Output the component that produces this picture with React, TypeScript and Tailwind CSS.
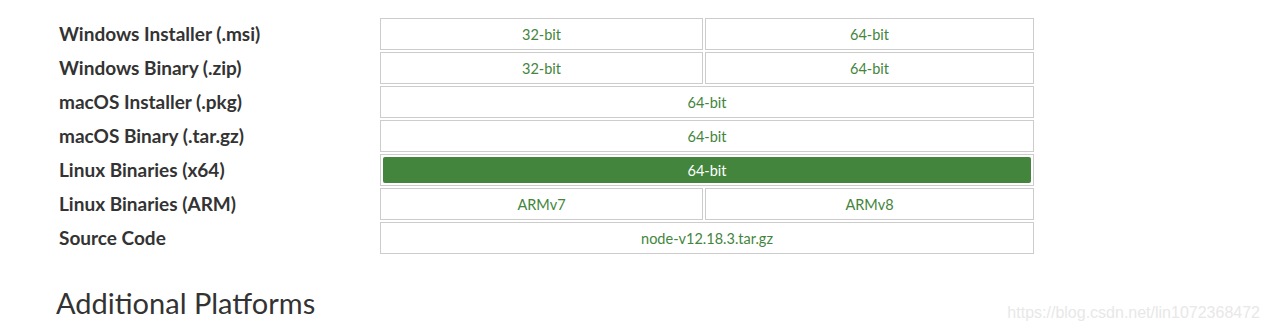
import React from "react";

type Row = { label: string; cells: string[]; active?: boolean };

const rows: Row[] = [
  { label: "Windows Installer (.msi)", cells: ["32-bit", "64-bit"] },
  { label: "Windows Binary (.zip)", cells: ["32-bit", "64-bit"] },
  { label: "macOS Installer (.pkg)", cells: ["64-bit"] },
  { label: "macOS Binary (.tar.gz)", cells: ["64-bit"] },
  { label: "Linux Binaries (x64)", cells: ["64-bit"], active: true },
  { label: "Linux Binaries (ARM)", cells: ["ARMv7", "ARMv8"] },
  { label: "Source Code", cells: ["node-v12.18.3.tar.gz"] },
];

export default function App() {
  return (
    <div
      className="relative w-[1269px] h-[330px] bg-white overflow-hidden"
      style={{ fontFamily: "Lato, 'Noto Sans', sans-serif" }}
    >
      <div className="pt-[18px] pl-[59px] flex flex-col gap-[2px]">
        {rows.map((row) => (
          <div key={row.label} className="flex items-center h-[32px]">
            <div className="w-[321px] pt-[1px] text-[19px] font-bold text-[#333]">{row.label}</div>
            <div className="flex gap-[2px] h-full">
              {row.active ? (
                <div className="w-[654px] h-full border border-[#ccc] p-[2px]">
                  <div className="h-full pt-[1px] rounded-[2px] bg-[#43853d] text-white text-[14.5px] flex items-center justify-center">
                    {row.cells[0]}
                  </div>
                </div>
              ) : row.cells.length === 2 ? (
                <>
                  <div className="w-[323px] h-full pt-[2px] border border-[#ccc] flex items-center justify-center text-[14.5px] text-[#43853d]">
                    {row.cells[0]}
                  </div>
                  <div className="w-[329px] h-full pt-[2px] border border-[#ccc] flex items-center justify-center text-[14.5px] text-[#43853d]">
                    {row.cells[1]}
                  </div>
                </>
              ) : (
                <div className="w-[654px] h-full pt-[2px] border border-[#ccc] flex items-center justify-center text-[14.5px] text-[#43853d]">
                  {row.cells[0]}
                </div>
              )}
            </div>
          </div>
        ))}
      </div>
      <h2 className="pl-[56px] mt-[31px] text-[29px] leading-[36px] font-normal text-[#333]">
        Additional Platforms
      </h2>
      <div
        className="absolute right-[9px] bottom-[5px] text-[16px] text-[#e8e8e8]"
        style={{ fontFamily: "'Liberation Sans', Arial, sans-serif" }}
      >
        https://blog.csdn.net/lin1072368472
      </div>
    </div>
  );
}
